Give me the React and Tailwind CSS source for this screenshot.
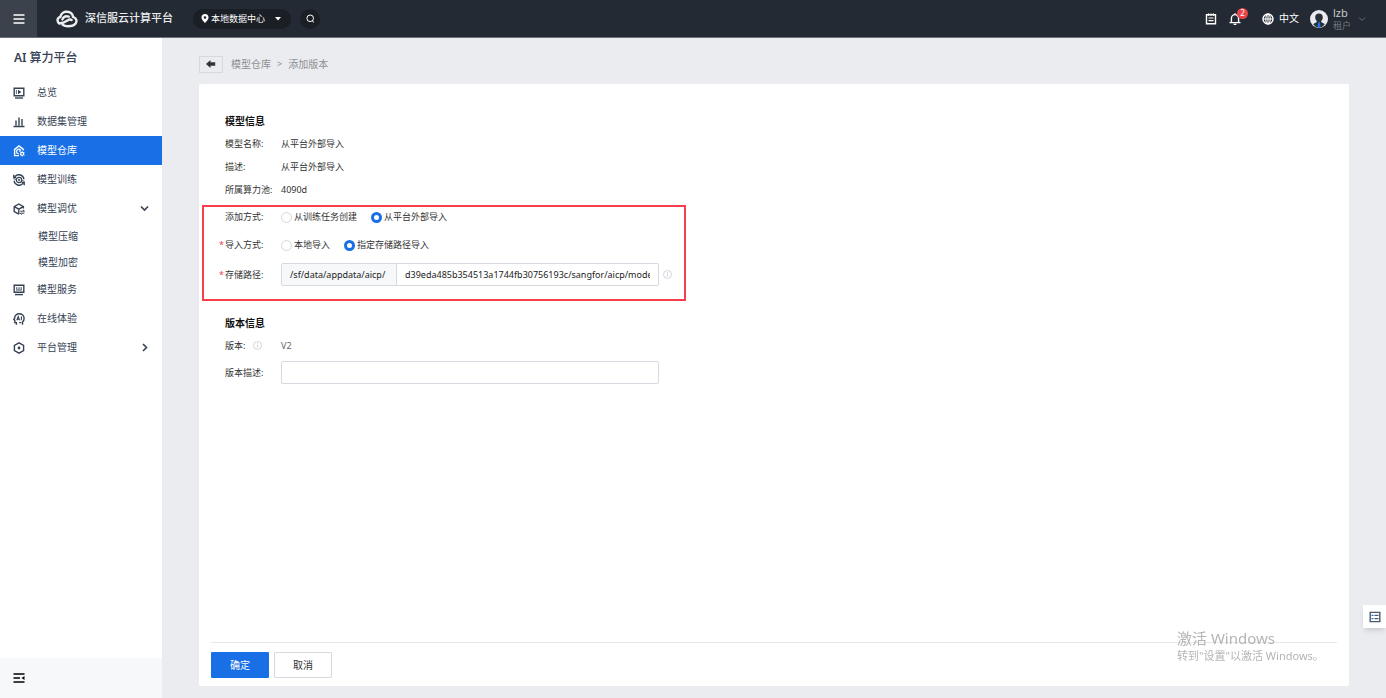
import { useState } from "react";

const Icon = ({ size = "size-3", box = 12, children }) => (
    <svg
        viewBox={`0 0 ${box} ${box}`}
        className={`${size} shrink-0`}
        fill="none"
        stroke="currentColor"
        strokeWidth="1.4"
        aria-hidden="true"
    >
        {children}
    </svg>
);

const OverviewIcon = () => (
    <Icon>
        <path d="M1.2 1.2h9.6v7.6H1.2z" />
        <path d="M2 11h8" />
        <path d="M5 2.8v4.4L8.4 5z" fill="currentColor" stroke="none" />
        <path d="M3.4 3v4" strokeWidth="0.8" />
    </Icon>
);

const DataIcon = () => (
    <Icon>
        <path d="M.5 10.5h11M3 9.5V4.5M6 9.5V1.5M9 9.5V3" />
    </Icon>
);

const RepoIcon = () => (
    <Icon>
        <path d="M6 10.6H1.6V4.4L6 1l4.4 3.4v1.2" />
        <path d="M8 5.4a2.4 2.4 0 1 0-2 3.6M6 6.2h1.6" strokeWidth="1.2" />
        <circle cx="9.2" cy="8.8" r="1.5" strokeWidth="1.2" />
        <path
            d="M9.2 6.3v1M9.2 10.3v1.2M7 7.6l.9.5M10.5 9.6l1 .5M11.4 7.6l-.9.5M7.9 9.6l-.9.5"
            strokeWidth="1"
        />
    </Icon>
);

const TrainIcon = () => (
    <Icon>
        <path d="M2.2 2.4a5 5 0 0 1 8.7 2.8M9.8 9.6A5 5 0 0 1 1.1 6.8M.8 .8v2.4h2.4M11.2 11.2V8.8H8.8" />
        <circle cx="6" cy="6" r="2.7" strokeWidth="1.2" />
        <circle cx="6" cy="6" r="1" fill="currentColor" stroke="none" />
        <path d="M.4 4.6 3.2 5.4M8.8 6.6l2.8.8" strokeWidth="1" />
    </Icon>
);

const TuneIcon = () => (
    <Icon>
        <path d="M5.8 11.2 1.2 8.6V3.6L5.8 1l4.6 2.6v2M1.2 3.6l4.6 2.6 4.6-2.6M5.8 6.2v5" />
        <path d="M7.4 8.2h4M10 6.8l1.6 1.5M11.4 10.2h-4M8.8 11.6l-1.6-1.4" strokeWidth="1" />
    </Icon>
);

const ServiceIcon = () => (
    <Icon>
        <path d="M1.2 1.2h9.6v7H1.2z" />
        <path d="M2 10.6h8" />
        <path d="M3.8 3.2v2M6 3.2v2M8.2 3.2v2M3 6h6" strokeWidth="1" />
    </Icon>
);

const TryIcon = () => (
    <Icon>
        <path d="M3.4 11.8V9.6H1.8V7.4l-1-.8.8-1.4C1.6 2.6 3.6.8 6.2.8c2.8 0 4.9 1.9 4.9 4.6 0 2-.9 2.8-1.6 3.6v2.8M6.2 9.6h2" />
        <path d="M3.8 7.2 5.2 3.6l1.4 3.6M4.4 6.2h1.6M8.4 3.6v3.6" strokeWidth="1.1" />
    </Icon>
);

const ManageIcon = () => (
    <Icon>
        <path d="M6 .8 10.6 3.4v5.2L6 11.2 1.4 8.6V3.4z" />
        <circle cx="6" cy="6" r="1.4" fill="currentColor" stroke="none" />
    </Icon>
);

const Chevron = ({ open }) => (
    <Icon size="size-[9px]" box={9}>
        <path
            d={open ? "M1 2.5 4.5 6 8 2.5" : "M3 1l3.5 3.5L3 8"}
            strokeWidth="1.6"
        />
    </Icon>
);

const InfoIcon = () => (
    <svg
        viewBox="0 0 9 9"
        className="size-[9px] shrink-0 text-[#c5cbd3]"
        fill="none"
        stroke="currentColor"
        strokeWidth="0.8"
        aria-hidden="true"
    >
        <circle cx="4.5" cy="4.5" r="4" />
        <path d="M4.5 2v1M4.5 3.8v3" />
    </svg>
);

const menu = [
    { name: "总览", icon: OverviewIcon },
    { name: "数据集管理", icon: DataIcon },
    { name: "模型仓库", icon: RepoIcon, active: true },
    { name: "模型训练", icon: TrainIcon },
    { name: "模型调优", icon: TuneIcon, open: true, items: ["模型压缩", "模型加密"] },
    { name: "模型服务", icon: ServiceIcon },
    { name: "在线体验", icon: TryIcon },
    { name: "平台管理", icon: ManageIcon, items: [] },
];

function Header() {
    return (
        <header className="flex h-[38px] shrink-0 items-center border-b border-[#6d7177] bg-[#242a33] text-white">
            <button
                aria-label="菜单"
                className="flex h-full w-[37px] items-center justify-center bg-[#3c424b]"
            >
                <Icon>
                    <path d="M.5 2h11M.5 6h11M.5 10h11" strokeWidth="1.5" />
                </Icon>
            </button>
            <svg
                viewBox="0 0 22 18"
                className="ml-[19px] h-[18px] w-[22px]"
                fill="none"
                stroke="#eceef0"
                strokeWidth="2.4"
                strokeLinecap="round"
                aria-hidden="true"
            >
                <path d="M3.4 13.6C.6 11.6 1 7.6 4.4 6.8 5 3.6 8 1.6 11 1.8c3.4.2 5.6 2.4 6 5 3.4 1 4.4 4.4 2.4 7-1.6 2-4.4 2.4-7.4 2.4-2.4 0-4-.4-5.4-1.4" />
                <path d="M3.6 13.2c3.6 0 5.8-1.4 7.8-2.8 1.6-1.1 3.2-1.2 4.2-.4" />
                <path d="M6.4 9.4c1-2.4 3.6-3.6 6.4-2.8" />
            </svg>
            <span className="ml-[7px] text-[11px] font-medium text-[#eceef0]">
                深信服云计算平台
            </span>
            <button className="ml-[20px] flex h-5 w-[98px] items-center rounded-full bg-[#1a1e25] px-2 text-[9px]">
                <svg viewBox="0 0 8 10" className="h-[9px] w-2" aria-hidden="true">
                    <path
                        d="M4 0a3.9 3.9 0 0 0-3.9 3.9C.1 6.4 4 10 4 10s3.9-3.6 3.9-6.1A3.9 3.9 0 0 0 4 0zm0 2.4a1.5 1.5 0 1 1 0 3 1.5 1.5 0 0 1 0-3z"
                        fill="#fff"
                    />
                </svg>
                <span className="ml-[2px]">本地数据中心</span>
                <svg viewBox="0 0 6 4" className="mr-[2px] ml-auto h-1 w-1.5" aria-hidden="true">
                    <path d="M0 0h6L3 3.5z" fill="#fff" />
                </svg>
            </button>
            <button
                aria-label="搜索"
                className="ml-[9px] flex size-5 items-center justify-center rounded-full bg-[#1a1e25]"
            >
                <Icon size="size-[9px]" box={9}>
                    <circle cx="4.2" cy="4.3" r="3.3" strokeWidth="1" />
                    <path d="M6 6.5l2 1.9" strokeWidth="1" />
                </Icon>
            </button>

            <div className="ml-auto flex items-center pr-5">
                <button aria-label="任务">
                    <Icon>
                        <path d="M1.5 1.8h9v9h-9z" />
                        <path d="M3.5 5h5M3.5 7.6h5" strokeWidth="1.1" />
                        <path d="M3.5 .4v2.4M6 .4v2.4M8.5 .4v2.4" strokeWidth="1" />
                    </Icon>
                </button>
                <button aria-label="消息" className="relative ml-3">
                    <Icon>
                        <path d="M2.4 9.4V5.2a3.6 3.6 0 0 1 7.2 0v4.2M.5 9.6h11M6 .3v1.5M4.6 11.5h2.8" />
                    </Icon>
                    <span className="absolute -top-[5px] left-[8px] flex size-[11px] items-center justify-center rounded-full bg-[#e8454b] text-[8px] leading-none">
                        2
                    </span>
                </button>
                <button className="ml-[21px] flex items-center text-[10px]">
                    <Icon>
                        <circle cx="6" cy="6" r="5" />
                        <ellipse cx="6" cy="6" rx="2.2" ry="5" strokeWidth="1.1" />
                        <path d="M1 6h10M6 1v10" strokeWidth="1.1" />
                    </Icon>
                    <span className="ml-[5px]">中文</span>
                </button>
                <button className="ml-[11px] flex items-center text-left">
                    <svg viewBox="0 0 18 18" className="size-[18px]" aria-hidden="true">
                        <circle cx="9" cy="9" r="9" fill="#e9ebee" />
                        <path
                            d="M9 3.4c-2.4 0-3.8 1.6-3.8 3.9 0 1.8.8 3.2 1.8 4-.2 1.4-2.2 1.4-3.8 3C4.6 16.3 6.6 17.6 9 17.6s4.4-1.3 5.8-3.3c-1.6-1.6-3.6-1.6-3.8-3 1-.8 1.8-2.2 1.8-4C12.8 5 11.4 3.4 9 3.4z"
                            fill="#2a3038"
                        />
                        <path d="M8.3 12h1.4l.8 4.5L9 17.8l-1.5-1.3z" fill="#1a70e8" />
                    </svg>
                    <span className="ml-[5px] w-[19px] leading-[13px]">
                        <span className="block text-[11px] text-[#c8cacd]">lzb</span>
                        <span className="block text-[9px] text-[#73777e]">租户</span>
                    </span>
                    <span className="ml-[6px] text-[#686d74]">
                        <svg
                            viewBox="0 0 8 8"
                            className="size-2"
                            fill="none"
                            stroke="currentColor"
                            aria-hidden="true"
                        >
                            <path d="M1 2.5l3 3 3-3" />
                        </svg>
                    </span>
                </button>
            </div>
        </header>
    );
}

function Sidebar() {
    return (
        <aside className="flex w-[162px] shrink-0 flex-col bg-white text-[#364254]">
            <h1 className="flex h-10 items-center pl-[14px] text-[12px] font-medium">
                <span className="mr-[3px] font-semibold">AI</span>算力平台
            </h1>
            <nav className="flex-1 text-[10px]">
                {menu.map(({ name, icon: MenuIcon, active, open, items }) => (
                    <div key={name}>
                        <a
                            href="#"
                            className={`flex h-[29px] items-center px-[13px] ${
                                active ? "bg-[#1970e6] text-white" : ""
                            }`}
                        >
                            <MenuIcon />
                            <span className="ml-3 flex-1">{name}</span>
                            {items && <Chevron open={open} />}
                        </a>
                        {items?.map((item) => (
                            <a
                                key={item}
                                href="#"
                                className="flex h-[26px] items-center pl-[38px]"
                            >
                                {item}
                            </a>
                        ))}
                    </div>
                ))}
            </nav>
            <div className="flex h-10 items-center bg-[#f6f8fa] pl-[13px] text-black">
                <button aria-label="收起">
                    <Icon>
                        <path d="M.5 2h11M.5 6h6.5M.5 10h11" />
                        <path d="M11.5 4v4L8.5 6z" fill="currentColor" stroke="none" />
                    </Icon>
                </button>
            </div>
        </aside>
    );
}

function Row({ label, htmlFor, required, info, height = "h-[23px]", children }) {
    const Label = htmlFor ? "label" : "span";

    return (
        <div className={`flex items-center ${height}`}>
            <span className="w-[6px] shrink-0 text-[#e8454b]">
                {required ? "*" : ""}
            </span>
            <Label
                htmlFor={htmlFor}
                className="flex w-[56px] shrink-0 items-center gap-2 whitespace-nowrap"
            >
                {label}:{info && <InfoIcon />}
            </Label>
            {children}
        </div>
    );
}

function Radios({ name, options, value, onChange }) {
    return (
        <div className="flex gap-[14px]">
            {options.map((option) => (
                <label key={option} className="flex items-center gap-[2px]">
                    <input
                        type="radio"
                        name={name}
                        checked={value === option}
                        onChange={() => onChange(option)}
                        className="size-[11px] appearance-none rounded-full border border-[#d3d8de] bg-white checked:border-[3px] checked:border-[#1970e6]"
                    />
                    {option}
                </label>
            ))}
        </div>
    );
}

export default function App() {
    const [addMode, setAddMode] = useState("从平台外部导入");
    const [importMode, setImportMode] = useState("指定存储路径导入");
    const [path, setPath] = useState(
        "d39eda485b354513a1744fb30756193c/sangfor/aicp/models",
    );
    const [description, setDescription] = useState("");

    return (
        <div className="flex min-h-screen flex-col bg-[#ebecf0] font-['Noto_Sans','Noto_Sans_CJK_SC',sans-serif]">
            <Header />
            <div className="flex flex-1">
                <Sidebar />
                <main className="flex min-w-0 flex-1 flex-col px-[37px] pb-3">
                    <div className="flex h-[46px] items-center pt-[6px] text-[10px] text-[#8c8f94]">
                        <button
                            aria-label="返回"
                            className="flex h-[17px] w-6 items-center justify-center border border-[#d6d8dc] text-[#333]"
                        >
                            <svg viewBox="0 0 10 8" className="h-2 w-2.5" aria-hidden="true">
                                <path d="M0 4l4.5-4v2.2h4.7v3.6H4.5V8z" fill="currentColor" />
                            </svg>
                        </button>
                        <a href="#" className="ml-2">模型仓库</a>
                        <span className="mx-[6px] text-[9px]">&gt;</span>
                        <span>添加版本</span>
                    </div>

                    <form className="flex flex-1 flex-col rounded-[2px] bg-white text-[9px] text-[#333]">
                        <div className="flex-1 pt-[27px]">
                            <section className="pl-5">
                                <h2 className="mb-px h-5 pl-[6px] text-[10px] leading-5 font-bold text-[#111]">
                                    模型信息
                                </h2>
                                <Row label="模型名称">从平台外部导入</Row>
                                <Row label="描述">从平台外部导入</Row>
                                <Row label="所属算力池">4090d</Row>
                            </section>

                            <section className="mt-1 ml-[3px] flex w-[484px] flex-col gap-2 border-2 border-[#f5404b] pb-[13px] pl-[15px]">
                                <Row label="添加方式" height="h-5">
                                    <Radios
                                        name="addMode"
                                        options={["从训练任务创建", "从平台外部导入"]}
                                        value={addMode}
                                        onChange={setAddMode}
                                    />
                                </Row>
                                <Row label="导入方式" required height="h-5">
                                    <Radios
                                        name="importMode"
                                        options={["本地导入", "指定存储路径导入"]}
                                        value={importMode}
                                        onChange={setImportMode}
                                    />
                                </Row>
                                <Row label="存储路径" htmlFor="path" required>
                                    <div className="mr-1 flex h-[23px] w-[378px] rounded-[2px] border border-[#d5dae0]">
                                        <span className="flex w-[115px] items-center border-r border-[#d5dae0] bg-[#f6f8fa] pl-2 text-[#222]">
                                            /sf/data/appdata/aicp/
                                        </span>
                                        <input
                                            id="path"
                                            type="text"
                                            value={path}
                                            onChange={(e) => setPath(e.target.value)}
                                            className="min-w-0 flex-1 px-2 text-[#222] outline-none"
                                        />
                                    </div>
                                    <InfoIcon />
                                </Row>
                            </section>

                            <section className="mt-3 pl-5">
                                <h2 className="mb-px h-5 pl-[6px] text-[10px] leading-5 font-bold text-[#111]">
                                    版本信息
                                </h2>
                                <Row label="版本" info>
                                    <span className="text-[#666]">V2</span>
                                </Row>
                                <div className="mt-1">
                                    <Row label="版本描述" htmlFor="description">
                                        <input
                                            id="description"
                                            type="text"
                                            value={description}
                                            onChange={(e) => setDescription(e.target.value)}
                                            className="h-[23px] w-[378px] rounded-[2px] border border-[#d5dae0] px-2 outline-none"
                                        />
                                    </Row>
                                </div>
                            </section>
                        </div>

                        <div className="mx-3 flex gap-[5px] border-t border-[#e6e8f0] pt-[9px] pb-2 text-[10px]">
                            <button
                                type="button"
                                className="h-[26px] w-[58px] rounded-[1px] bg-[#1970e6] text-white"
                            >
                                确定
                            </button>
                            <button
                                type="button"
                                className="h-[26px] w-[58px] rounded-[1px] border border-[#d5dae0] bg-white"
                            >
                                取消
                            </button>
                        </div>
                    </form>
                </main>
            </div>

            <button
                aria-label="问卷"
                className="fixed right-0 bottom-[70px] flex h-[23px] w-[23px] items-center justify-center bg-white text-[#4d5767] shadow-md"
            >
                <Icon>
                    <path d="M1.2 1.4h9.6v9.2H1.2z" />
                    <path d="M5.5 4.4h4M5.5 7.6h4" strokeWidth="1.1" />
                    <path d="M2.5 4.4h2M2.5 7.6h2" stroke="#1970e6" />
                </Icon>
            </button>

            <div className="pointer-events-none fixed right-[65px] bottom-[34px] w-[144px] whitespace-nowrap text-[#b4b4b4]">
                <p className="text-[15px] leading-5">激活 Windows</p>
                <p className="text-[11px] leading-4">转到"设置"以激活 Windows。</p>
            </div>
        </div>
    );
}
